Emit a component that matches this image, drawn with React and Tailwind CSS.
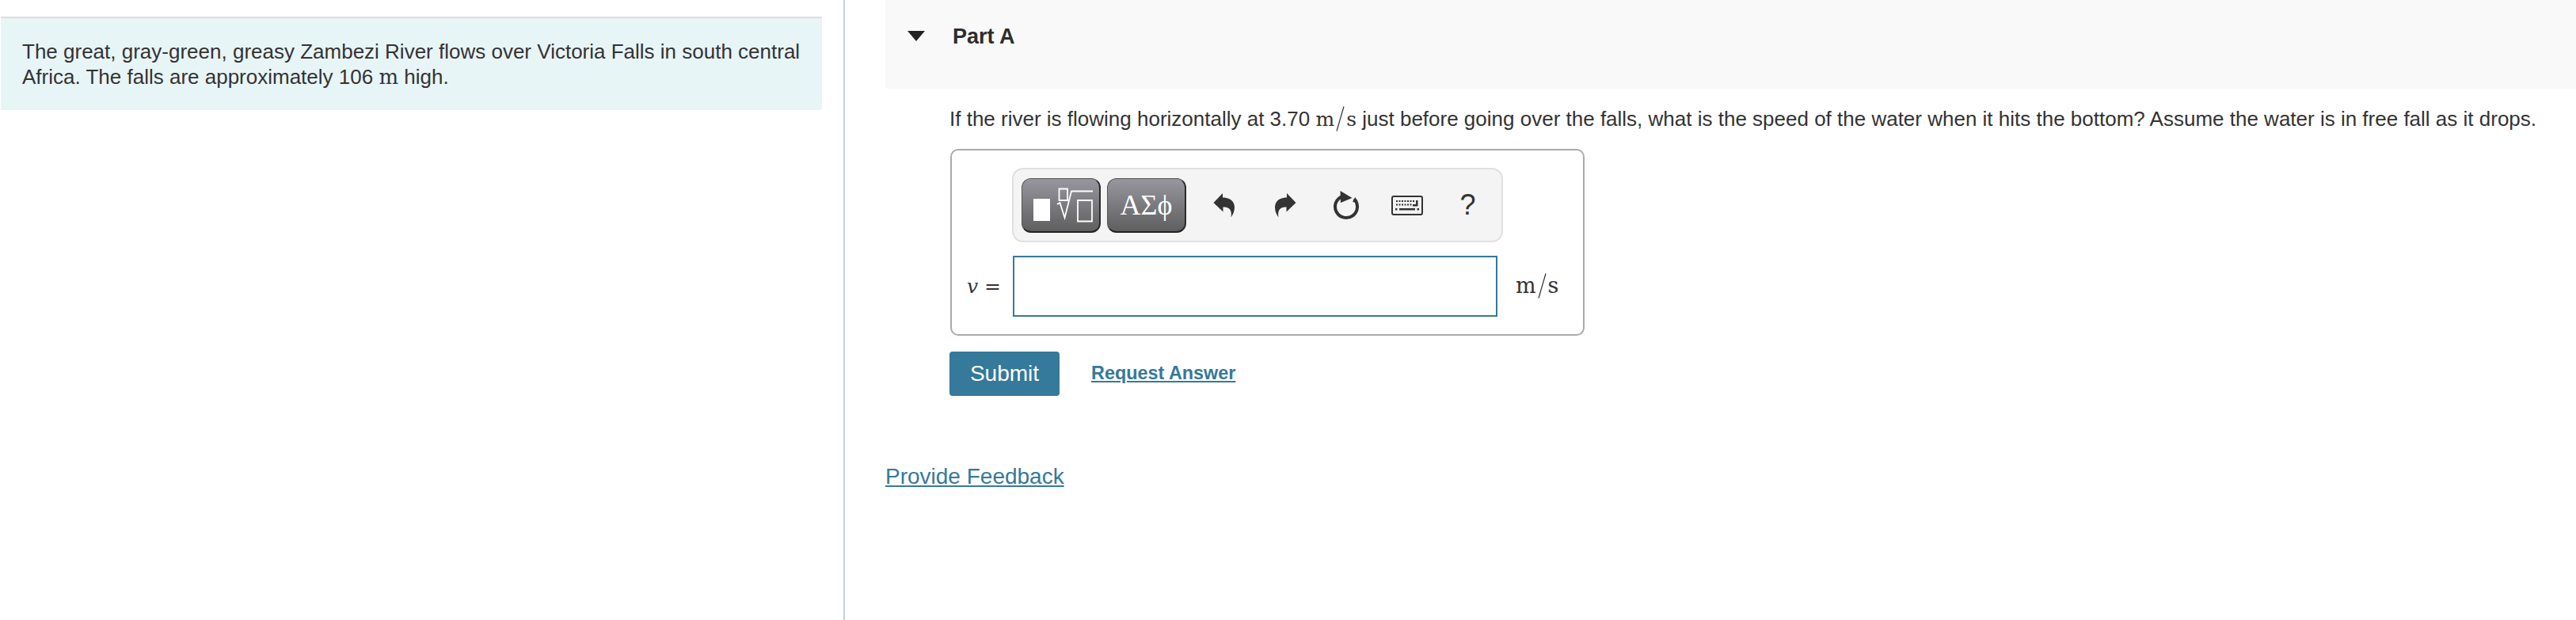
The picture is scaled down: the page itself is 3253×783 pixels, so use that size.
import React from "react";

const SANS = "font-['Liberation_Sans',Arial,sans-serif]";
const MATH = "font-['DejaVu_Serif','Liberation_Serif',serif]";
const SERIF = "font-['Liberation_Serif','Times_New_Roman',serif]";

function Undo({ flip }) {
  return (
    <svg width="28" height="31" viewBox="0 0 28 31" className={flip ? "-scale-x-100" : ""}>
      <path fill="#333333" d="M0.5 12 L12 0 V5.5 C21 5.5 27 10 27 18 C27 23 25 27 22.5 30.5 C23.5 25 22.5 21 19.5 19 C17.5 17.8 15 17.5 12.5 17.5 V23.5 Z" />
    </svg>
  );
}

function Refresh() {
  return (
    <svg width="34" height="38" viewBox="0 0 34 38">
      <path fill="none" stroke="#333333" strokeWidth="4" d="M12.5 7.8 A14 14 0 1 0 27 11.2" />
      <path fill="#333333" d="M9.5 1 L24.5 10 L10 16 Z" />
      <path fill="#333333" d="M28.5 9 L31.5 16 L25 15 Z" />
    </svg>
  );
}

function Keyboard() {
  const top = [6, 9.5, 13, 16.5, 20, 23.5, 27];
  const mid = [6, 9.5, 13, 16.5, 20, 23.5];
  return (
    <svg width="40" height="25" viewBox="0 0 40 25">
      <rect x="1" y="1" width="38" height="23" rx="2" fill="#f4f4f4" stroke="#333333" strokeWidth="2" />
      {top.map((x) => <rect key={x} x={x} y="6" width="2" height="2" fill="#333333" />)}
      {mid.map((x) => <rect key={x} x={x} y="10.5" width="2" height="2" fill="#333333" />)}
      <path fill="#333333" d="M31 6 H33.5 V13.5 H27 V11 H31 Z" />
      <rect x="5" y="16" width="2.5" height="2.5" fill="#333333" />
      <rect x="10" y="16" width="20" height="2.5" fill="#333333" />
      <rect x="32.5" y="16" width="2.5" height="2.5" fill="#333333" />
    </svg>
  );
}

function Radical() {
  return (
    <svg width="47" height="44" viewBox="0 0 47 44" className="ml-[8px] mt-[11px]">
      <path fill="none" stroke="#ffffff" strokeWidth="1.8" d="M3.5 1.5 H14 V16 H3.5 Z" />
      <path fill="none" stroke="#ffffff" strokeWidth="1.8" d="M1 21 L4.5 19 L10.5 38 L19 4.5 H46" />
      <path fill="none" stroke="#ffffff" strokeWidth="1.8" d="M27 16 H45 V42.5 H27 Z" />
    </svg>
  );
}

function Fraction() {
  return (
    <span className={`${MATH} whitespace-nowrap leading-none`}>
      m
      <svg width="11" height="32" viewBox="0 0 11 32" className="mx-[2px] inline-block align-[-7px]">
        <path d="M10 0.5 L1 31.5" stroke="#333333" strokeWidth="1.2" fill="none" />
      </svg>
      s
    </span>
  );
}

function ToolSlot({ children }) {
  return <div className="flex w-[77px] justify-center">{children}</div>;
}

export default function App() {
  return (
    <div className={`${SANS} flex h-[783px] w-[3253px] overflow-hidden bg-white text-[#333333]`}>
      <div className="h-full w-[1067px] shrink-0 border-r-2 border-[#c4d1e0] pl-px pt-[21px]">
        <div className="h-[118px] w-[1037px] border-t-2 border-[#dedede] bg-[#e8f5f7] pl-[27px] pt-[26px] text-[26px] leading-[32px]">
          The great, gray-green, greasy Zambezi River flows over Victoria Falls in south central Africa. The falls are approximately 106 <span className={`${MATH} text-[26px] leading-none`}>m</span> high.
        </div>
      </div>

      <div className="min-w-0 flex-1 pl-[51px]">
        <div className="flex h-[112px] items-start bg-[#f9f9f9] pl-[28px] pt-[30px]">
          <svg width="22" height="13" viewBox="0 0 22 13" className="mt-[9px]">
            <path d="M0 0 H22 L11 13 Z" fill="#222222" />
          </svg>
          <div className="ml-[35px] text-[27px] font-bold leading-[32px] text-[#2d2d2d]">Part A</div>
        </div>

        <div className="pl-[81px]">
          <p className="mt-[21px] h-[34px] whitespace-nowrap text-[26px] leading-[34px]">
            If the river is flowing horizontally at 3.70 <span className="text-[25px]"><Fraction /></span> just before going over the falls, what is the speed of the water when it hits the bottom? Assume the water is in free fall as it drops.
          </p>

          <div className="ml-px mt-[21px] h-[236px] w-[801px] rounded-[10px] border-2 border-[#aaaaaa] pl-[76px] pt-[22px]">
            <div className="flex h-[94px] w-[620px] items-center rounded-[14px] border-2 border-[#e0e0e0] bg-[#f4f4f4] pl-[10px]">
              <div className="flex h-[69px] w-[100px] items-start rounded-[12px] border border-r-2 border-b-2 border-[#555555] border-r-[#2a2a2a] border-b-[#222222] bg-linear-to-b from-[#98979f] to-[#5f5f60] pl-[14px]">
                <div className="mt-[25px] h-[28px] w-[21px] bg-white" />
                <Radical />
              </div>
              <div className={`${SERIF} ml-[8px] flex h-[69px] w-[100px] items-center justify-center rounded-[12px] border border-r-2 border-b-2 border-[#555555] border-r-[#2a2a2a] border-b-[#222222] bg-linear-to-b from-[#98979f] to-[#5f5f60] text-[36px] leading-none text-white`}>
                ΑΣϕ
              </div>
              <div className="ml-[9px] flex items-center">
                <ToolSlot><Undo /></ToolSlot>
                <ToolSlot><Undo flip /></ToolSlot>
                <ToolSlot><Refresh /></ToolSlot>
                <ToolSlot><Keyboard /></ToolSlot>
                <ToolSlot><span className="text-[36px] leading-none">?</span></ToolSlot>
              </div>
            </div>

            <div className="-ml-[57px] mt-[17px] flex items-center">
              <div className={`${MATH} w-[58px] whitespace-nowrap text-[25px]`}><i>v</i> =</div>
              <div className="h-[77px] w-[612px] border-2 border-[#35799b]" />
              <div className="ml-[23px] text-[27px]"><Fraction /></div>
            </div>
          </div>

          <div className="mt-[20px] flex items-center">
            <button className="h-[56px] w-[139px] rounded-[4px] bg-[#35799b] text-[28px] text-white">Submit</button>
            <a className="ml-[40px] text-[23.4px] font-bold text-[#35799b] underline">Request Answer</a>
          </div>
        </div>

        <a className="mt-[82px] block w-fit text-[28px] leading-[40px] text-[#35799b] underline">Provide Feedback</a>
      </div>
    </div>
  );
}
